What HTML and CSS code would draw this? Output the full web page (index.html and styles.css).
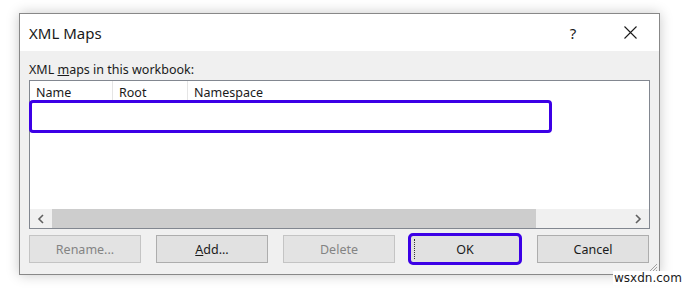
FILE: index.html
```html
<!DOCTYPE html>
<html>
<head>
  <meta charset="utf-8">
  <title>XML Maps</title>
  <link rel="stylesheet" href="styles.css">
</head>
<body>
  <div class="dialog">
    <div class="titlebar">
      <span class="title">XML Maps</span>
      <span class="help">?</span>
      <span class="close">
        <svg width="13" height="13" viewBox="0 0 13 13"><path d="M0.5 0.5 L12.5 12.5 M12.5 0.5 L0.5 12.5" stroke="#1a1a1a" stroke-width="1.1" fill="none"/></svg>
      </span>
    </div>

    <div class="content">
      <div class="label">XML <u>m</u>aps in this workbook:</div>

      <div class="maplist">
        <div class="listhead">
          <div class="col col_name">Name</div>
          <div class="col col_root">Root</div>
          <div class="col col_ns">Namespace</div>
        </div>
        <div class="listbody"></div>
        <div class="hscroll">
          <div class="arrow">
            <svg width="8" height="10" viewBox="0 0 8 10"><path d="M6 1 L2 5 L6 9" stroke="#606060" stroke-width="1.6" fill="none"/></svg>
          </div>
          <div class="thumb"></div>
          <div class="track"></div>
          <div class="arrow">
            <svg width="8" height="10" viewBox="0 0 8 10"><path d="M2 1 L6 5 L2 9" stroke="#606060" stroke-width="1.6" fill="none"/></svg>
          </div>
        </div>
        <!-- marca violeta sobre la primera fila -->
        <div class="mark_row"></div>
      </div>

      <div class="buttons">
        <button class="btn disabled">Rename...</button>
        <button class="btn"><u>A</u>dd...</button>
        <button class="btn disabled">Delete</button>
        <button class="btn btn_ok">OK</button>
        <button class="btn">Cancel</button>
      </div>
    </div>

    <svg class="grip" width="10" height="10" viewBox="0 0 10 10"><path d="M9 1 L1 9 M9 4 L4 9 M9 7 L7 9" stroke="#a0a0a0" stroke-width="1" fill="none"/></svg>
  </div>

  <div class="watermark">wsxdn.com</div>
</body>
</html>
```

FILE: styles.css
```css
* {
    margin: 0;
    padding: 0;
    box-sizing: border-box;
}

body {
    background-color: #ffffff;
    font-family: "Noto Sans", "Open Sans", sans-serif;
    color: #1a1a1a;
    padding: 13px 0 0 19px;
    width: 685px;
    height: 288px;
    overflow: hidden;
    position: relative;
}

/* ventana del dialogo */
.dialog {
    width: 641px;
    height: 262px;
    border: 1px solid #888888;
    background-color: #f0f0f0;
    box-shadow: 0 0 12px rgba(0, 0, 0, 0.22);
    display: flex;
    flex-direction: column;
    position: relative;
}

.titlebar {
    height: 37px;
    background-color: #ffffff;
    display: flex;
    align-items: center;
    padding-left: 9px;
}

.title {
    font-size: 15px;
    margin-right: auto;
}

.help {
    font-size: 15px;
    width: 20px;
    text-align: center;
    margin-right: 37px;
}

.close {
    width: 20px;
    margin-right: 19px;
    display: flex;
    justify-content: center;
}

.content {
    padding: 10px 9px 10px 9px;
    display: flex;
    flex-direction: column;
}

.label {
    font-size: 12.5px;
    line-height: 17px;
    margin-bottom: 2px;
}

/* lista de mapas */
.maplist {
    width: 621px;
    height: 149px;
    border: 1px solid #828790;
    background-color: #ffffff;
    display: flex;
    flex-direction: column;
    position: relative;
}

.listhead {
    display: flex;
    height: 20px;
    font-size: 12.5px;
    line-height: 17px;
}

.col {
    padding: 3px 0 0 6px;
    border-right: 1px solid #e5e5e5;
    height: 20px;
}

.col_name {
    width: 83px;
}

.col_root {
    width: 75px;
}

.col_ns {
    border-right: none;
}

.listbody {
    flex: 1;
}

.hscroll {
    height: 19px;
    display: flex;
    background-color: #f0f0f0;
}

.arrow {
    width: 22px;
    display: flex;
    align-items: center;
    justify-content: center;
}

.thumb {
    width: 484px;
    background-color: #cdcdcd;
}

.track {
    flex: 1;
}

.mark_row {
    position: absolute;
    left: -1px;
    top: 19px;
    width: 523px;
    height: 33px;
    border: 3px solid #3c00e6;
    border-radius: 4px;
}

/* botones */
.buttons {
    display: flex;
    gap: 15px;
    margin-top: 6px;
    width: 621px;
}

.btn {
    width: 112px;
    height: 28px;
    background-color: #e1e1e1;
    border: 1px solid #adadad;
    font-family: "Noto Sans", "Open Sans", sans-serif;
    font-size: 12.5px;
    color: #1a1a1a;
}

.btn.disabled {
    color: #838383;
    border-color: #c4c4c4;
    background-color: #e3e3e3;
}

.btn_ok {
    width: 110px;
    margin-right: 2px;
    outline: 3px solid #3c00e6;
    outline-offset: -1px;
    border-radius: 3px;
    position: relative;
}

/* rectangulo de foco punteado */
.btn_ok::before {
    content: "";
    position: absolute;
    left: 3px;
    top: 3px;
    bottom: 3px;
    border-left: 1px dotted #333333;
}

.grip {
    position: absolute;
    right: 1px;
    bottom: 1px;
}

.watermark {
    position: absolute;
    left: 613px;
    top: 271px;
    font-family: "DejaVu Sans", sans-serif;
    font-size: 12px;
    color: #1a1a1a;
    background-color: #ffffff;
    padding: 0 1px;
    line-height: 14px;
}
```
